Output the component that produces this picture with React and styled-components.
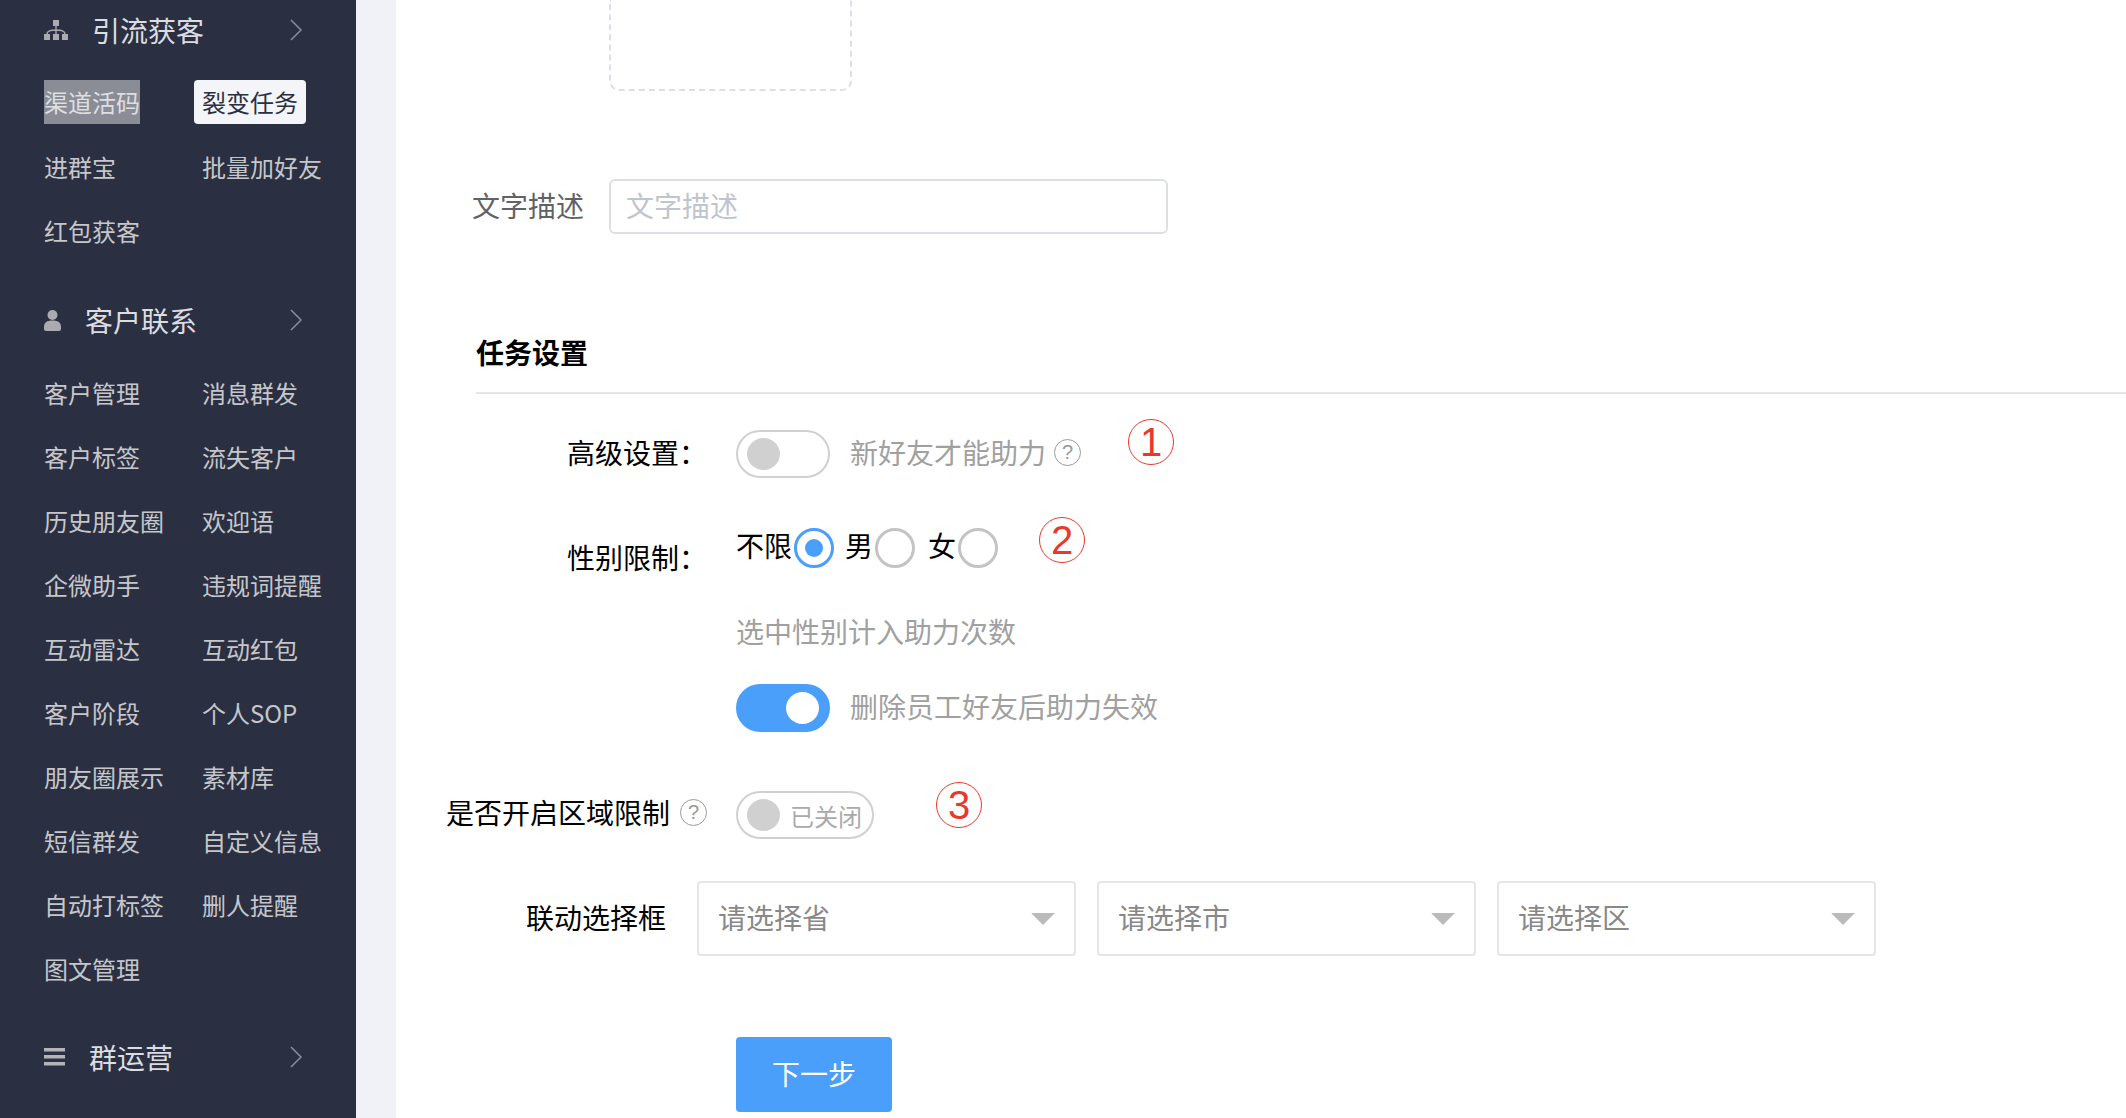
import React from 'react'
import styled, { createGlobalStyle } from 'styled-components'

const GlobalStyle = createGlobalStyle`
  * { box-sizing: border-box; }
  html, body { margin: 0; padding: 0; height: 100%; overflow: hidden; background: #fff; }
  body { font-family: "Noto Sans CJK SC", "Liberation Sans", sans-serif; }
`

const TreeIcon = () => (
  <svg width="24" height="20" viewBox="0 0 24 20" fill="#a9abb0">
    <rect x="9" y="0" width="6" height="6" />
    <rect x="0" y="14" width="6" height="6" />
    <rect x="9" y="14" width="6" height="6" />
    <rect x="18" y="14" width="6" height="6" />
    <path d="M12 6v8M3 14c0-3 3-4 9-4s9 1 9 4" fill="none" stroke="#a9abb0" strokeWidth="1.4" />
  </svg>
)

const PersonIcon = () => (
  <svg width="17" height="21" viewBox="0 0 17 21" fill="#a9abb0">
    <circle cx="8.5" cy="5" r="5" />
    <path d="M0 17c0-4.500 3-6.500 8.500-6.500S17 12.500 17 17v2a2 2 0 0 1-2 2H2a2 2 0 0 1-2-2z" />
  </svg>
)

const LinesIcon = () => (
  <svg width="21" height="18" viewBox="0 0 21 18" fill="#b3b4b8">
    <rect x="0" y="0" width="21" height="3.500" />
    <rect x="0" y="7" width="21" height="3.500" />
    <rect x="0" y="14" width="21" height="3.500" />
  </svg>
)

const Chevron = () => (
  <svg width="12" height="22" viewBox="0 0 12 22" fill="none" stroke="#8d8f97" strokeWidth="1.500">
    <path d="M1 1l10 10L1 21" />
  </svg>
)

const menus = [
  {
    title: '引流获客',
    icon: <TreeIcon />,
    top: 0,
    items: ['渠道活码', '裂变任务', '进群宝', '批量加好友', '红包获客'],
  },
  {
    title: '客户联系',
    icon: <PersonIcon />,
    top: 38,
    items: [
      '客户管理', '消息群发', '客户标签', '流失客户', '历史朋友圈', '欢迎语', '企微助手', '违规词提醒', '互动雷达',
      '互动红包', '客户阶段', '个人SOP', '朋友圈展示', '素材库', '短信群发', '自定义信息', '自动打标签', '删人提醒', '图文管理',
    ],
  },
  { title: '群运营', icon: <LinesIcon />, top: 37, items: [] },
]

const App = () => {
  return (
    <Page>
      <GlobalStyle />
      <Sidebar>
        {menus.map((menu) => (
          <MenuGroup key={menu.title} $top={menu.top}>
            <MenuHead>
              {menu.icon}
              <MenuTitle>{menu.title}</MenuTitle>
              <ChevronSlot><Chevron /></ChevronSlot>
            </MenuHead>
            {menu.items.length > 0 && (
              <SubGrid>
                {menu.items.map((item) => (
                  <SubItem key={item} $hover={item === '渠道活码'} $active={item === '裂变任务'}>{item}</SubItem>
                ))}
              </SubGrid>
            )}
          </MenuGroup>
        ))}
      </Sidebar>
      <Gutter />
      <Main>
        <Row $label={213}>
          <span />
          <UploadBox />
        </Row>
        <Row $label={213} $top={88} $center>
          <FieldLabel $pad={25} $offset={-3} $color="#606266">文字描述</FieldLabel>
          <TextInput placeholder="文字描述" />
        </Row>
        <SectionTitle>任务设置</SectionTitle>

        <Row $label={340} $top={36}>
          <FieldLabel $pad={29} $offset={2}>高级设置：</FieldLabel>
          <Controls>
            <Switch />
            <Hint>新好友才能助力</Hint>
            <Help />
            <Note $left={47} $top={-11}>1</Note>
          </Controls>
        </Row>

        <Row $label={340} $top={50}>
          <FieldLabel $pad={29} $offset={9}>性别限制：</FieldLabel>
          <Controls>
            <RadioText>不限</RadioText>
            <Radio $checked />
            <RadioText $left={11}>男</RadioText>
            <Radio />
            <RadioText $left={13}>女</RadioText>
            <Radio />
            <Note $left={41} $top={-11}>2</Note>
          </Controls>
        </Row>

        <Row $label={340} $top={34}>
          <span />
          <Hint $flat>选中性别计入助力次数</Hint>
        </Row>

        <Row $label={340} $top={33}>
          <span />
          <Controls>
            <Switch $on />
            <Hint>删除员工好友后助力失效</Hint>
          </Controls>
        </Row>

        <Row $label={340} $top={59}>
          <FieldLabel $pad={29} $offset={1}>
            是否开启区域限制<Help />
          </FieldLabel>
          <Controls>
            <Switch $text>
              <SwitchText>已关闭</SwitchText>
            </Switch>
            <Note $left={62} $top={-9}>3</Note>
          </Controls>
        </Row>

        <Row $label={301} $top={42} $center>
          <FieldLabel $pad={31} $offset={-3}>联动选择框</FieldLabel>
          <SelectRow>
            {['请选择省', '请选择市', '请选择区'].map((text) => (
              <SelectBox key={text}>
                {text}
                <Caret />
              </SelectBox>
            ))}
          </SelectRow>
        </Row>

        <Row $label={340} $top={81}>
          <span />
          <NextButton>下一步</NextButton>
        </Row>
      </Main>
    </Page>
  )
}

export default App

const Page = styled.div`
  display: flex;
  width: 2126px;
  height: 1118px;
  overflow: hidden;
`

const Sidebar = styled.aside`
  width: 356px;
  flex: none;
  height: 100%;
  background: #2a3042;
  overflow: hidden;
`

const Gutter = styled.div`
  width: 40px;
  flex: none;
  background: #f0f2f7;
`

const Main = styled.main`
  flex: 1;
  min-width: 0;
  background: #fff;
  display: flex;
  flex-direction: column;
`

const MenuGroup = styled.section`
  margin-top: ${(p) => p.$top}px;
`

const MenuHead = styled.div`
  height: 60px;
  padding-left: 44px;
  display: flex;
  align-items: center;
  gap: 24px;
`

const MenuTitle = styled.span`
  font-size: 28px;
  color: #dcdde0;
  line-height: 60px;
`

const ChevronSlot = styled.span`
  margin-left: auto;
  margin-right: 54px;
  display: flex;
`

const SubGrid = styled.div`
  display: grid;
  grid-template-columns: 150px 1fr;
  row-gap: 20px;
  padding-left: 44px;
  margin-top: 20px;
`

const SubItem = styled.span`
  justify-self: start;
  height: 44px;
  line-height: ${(p) => (p.$active || p.$hover ? 44 : 46)}px;
  font-size: 24px;
  white-space: nowrap;
  color: ${(p) => (p.$active ? '#2a3042' : p.$hover ? '#dedfe1' : '#c6c7cb')};
  background: ${(p) => (p.$active ? '#f3f5f9' : p.$hover ? '#8a8d96' : 'transparent')};
  border-radius: ${(p) => (p.$active ? '4px' : '0')};
  &:nth-child(even) {
    padding: 0 8px;
  }
`

const Row = styled.div`
  display: grid;
  grid-template-columns: ${(p) => p.$label}px 1fr;
  margin-top: ${(p) => p.$top || 0}px;
  align-items: ${(p) => (p.$center ? 'center' : 'start')};
`

const FieldLabel = styled.label`
  display: flex;
  justify-content: flex-end;
  align-items: center;
  gap: 10px;
  padding-right: ${(p) => p.$pad}px;
  margin-top: ${(p) => p.$offset || 0}px;
  font-size: 28px;
  line-height: 40px;
  color: ${(p) => p.$color || '#000'};
  white-space: nowrap;
`

const UploadBox = styled.div`
  width: 243px;
  height: 91px;
  border: 2px dashed #dcdfe6;
  border-top: none;
  border-radius: 0 0 10px 10px;
`

const TextInput = styled.input`
  width: 559px;
  height: 55px;
  border: 2px solid #dcdfe6;
  border-radius: 6px;
  padding: 0 15px 3px;
  font: inherit;
  font-size: 28px;
  outline: none;
  &::placeholder {
    color: #c0c4cc;
    opacity: 1;
  }
`

const SectionTitle = styled.h3`
  margin: 98px 0 0 80px;
  padding-bottom: 20px;
  border-bottom: 2px solid #e6e6e6;
  font-size: 28px;
  line-height: 40px;
  font-weight: 700;
  color: #000;
`

const Controls = styled.div`
  display: flex;
  align-items: center;
  white-space: nowrap;
`

const Switch = styled.span`
  display: inline-flex;
  align-items: center;
  justify-content: ${(p) => (p.$on ? 'flex-end' : 'flex-start')};
  gap: 10px;
  height: 48px;
  min-width: 94px;
  padding: ${(p) => (p.$text ? '0 10px 0 9px' : '0 9px')};
  border: 2px solid ${(p) => (p.$on ? '#4a9ffa' : '#d0d0d0')};
  border-radius: 24px;
  background: ${(p) => (p.$on ? '#4a9ffa' : '#fff')};
  &::before {
    content: '';
    width: 33px;
    height: 32px;
    border-radius: 50%;
    background: ${(p) => (p.$on ? '#fff' : '#d0d0d0')};
  }
`

const SwitchText = styled.span`
  font-size: 24px;
  line-height: 48px;
  padding-top: 2px;
  color: #aaa;
`

const Hint = styled.span`
  margin-left: ${(p) => (p.$flat ? 0 : 20)}px;
  margin-bottom: ${(p) => (p.$flat ? 0 : 4)}px;
  font-size: 28px;
  line-height: 40px;
  color: #a0a0a0;
`

const Help = styled.span`
  display: inline-flex;
  align-items: center;
  justify-content: center;
  width: 27px;
  height: 27px;
  margin-left: 8px;
  margin-bottom: 4px;
  border: 1.5px solid #999;
  border-radius: 50%;
  font-family: "Liberation Sans", sans-serif;
  font-size: 20px;
  line-height: 1;
  color: #999;
  &::before {
    content: '?';
  }
  label > & {
    margin-left: 0;
    margin-bottom: 0;
  }
`

const Note = styled.span`
  display: inline-flex;
  align-items: center;
  justify-content: center;
  align-self: flex-start;
  width: 46px;
  height: 46px;
  margin-left: ${(p) => p.$left}px;
  margin-top: ${(p) => p.$top}px;
  border: 1.5px solid #e8392a;
  border-radius: 50%;
  font-family: "Liberation Sans", sans-serif;
  font-size: 40px;
  line-height: 1;
  color: #e8392a;
`

const RadioText = styled.span`
  margin-left: ${(p) => p.$left || 0}px;
  margin-top: -6px;
  margin-right: 2px;
  font-size: 28px;
  line-height: 40px;
  color: #000;
`

const Radio = styled.span`
  display: inline-flex;
  align-items: center;
  justify-content: center;
  width: 40px;
  height: 40px;
  border-radius: 50%;
  border: 3px solid ${(p) => (p.$checked ? '#4a9ffa' : '#c4c4c4')};
  &::before {
    content: '';
    width: 18px;
    height: 18px;
    border-radius: 50%;
    background: ${(p) => (p.$checked ? '#4a9ffa' : 'transparent')};
  }
`

const SelectRow = styled.div`
  display: flex;
  gap: 21px;
`

const SelectBox = styled.div`
  display: flex;
  align-items: center;
  justify-content: space-between;
  width: 379px;
  height: 75px;
  padding: 0 19px 4px 19px;
  border: 2px solid #e6e6e6;
  border-radius: 4px;
  font-size: 28px;
  color: #888;
`

const Caret = styled.span`
  width: 0;
  height: 0;
  margin-top: 4px;
  border-left: 12px solid transparent;
  border-right: 12px solid transparent;
  border-top: 12px solid #bbb;
`

const NextButton = styled.button`
  width: 156px;
  height: 75px;
  padding: 0 0 3px;
  border: none;
  border-radius: 4px;
  background: #4a9ffa;
  color: #fff;
  font: inherit;
  font-size: 28px;
`
